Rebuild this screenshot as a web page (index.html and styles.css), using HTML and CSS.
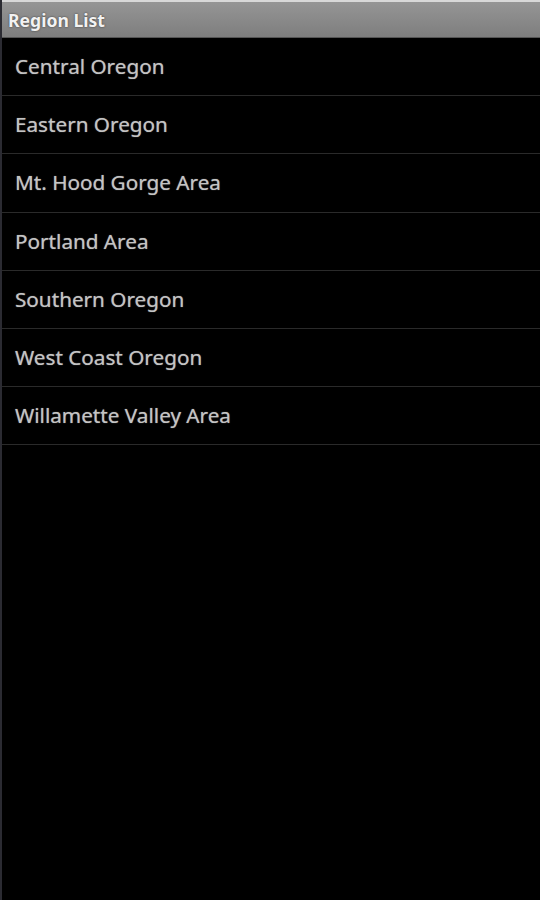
FILE: index.html
```html
<!DOCTYPE html>
<html lang="en">
<head>
    <meta charset="UTF-8">
    <meta name="viewport" content="width=device-width, initial-scale=1.0">
    <title>Region List</title>
    <link rel="stylesheet" href="styles.css">
</head>
<body>
    <div class="screen">
        <!-- Barra de titulo -->
        <div class="title-bar">Region List</div>

        <!-- Lista de regiones -->
        <ul class="region-list">
            <li>Central Oregon</li>
            <li>Eastern Oregon</li>
            <li>Mt. Hood Gorge Area</li>
            <li>Portland Area</li>
            <li>Southern Oregon</li>
            <li>West Coast Oregon</li>
            <li>Willamette Valley Area</li>
        </ul>
    </div>
</body>
</html>
```

FILE: styles.css
```css
/* Estilos globales */
body {
    font-family: "Noto Sans", "Open Sans", sans-serif;
    background-color: #000;
    margin: 0;
    padding: 0;
}

.screen {
    min-height: 900px;
    border-left: 2px solid #2b2b32;
    background-color: #000;
}

/* Barra de titulo */
.title-bar {
    height: 35px;
    line-height: 36px;
    padding-left: 6px;
    border-top: 2px solid #d8d8d8;
    border-bottom: 1px solid #555;
    background: linear-gradient(#959595, #7e7e7e);
    color: #f2f2f2;
    font-size: 17.6px;
    font-weight: bold;
    text-shadow: 0 0 2px #333;
}

/* Lista */
.region-list {
    list-style: none;
    margin: 0;
    padding: 0;
}

.region-list li {
    height: 57.2px;
    line-height: 57px;
    padding-left: 13px;
    border-bottom: 1px solid #2a2a2a;
    color: #c4c4c4;
    font-size: 20.7px;
    text-shadow: 0 0 1px #888;
}
```
